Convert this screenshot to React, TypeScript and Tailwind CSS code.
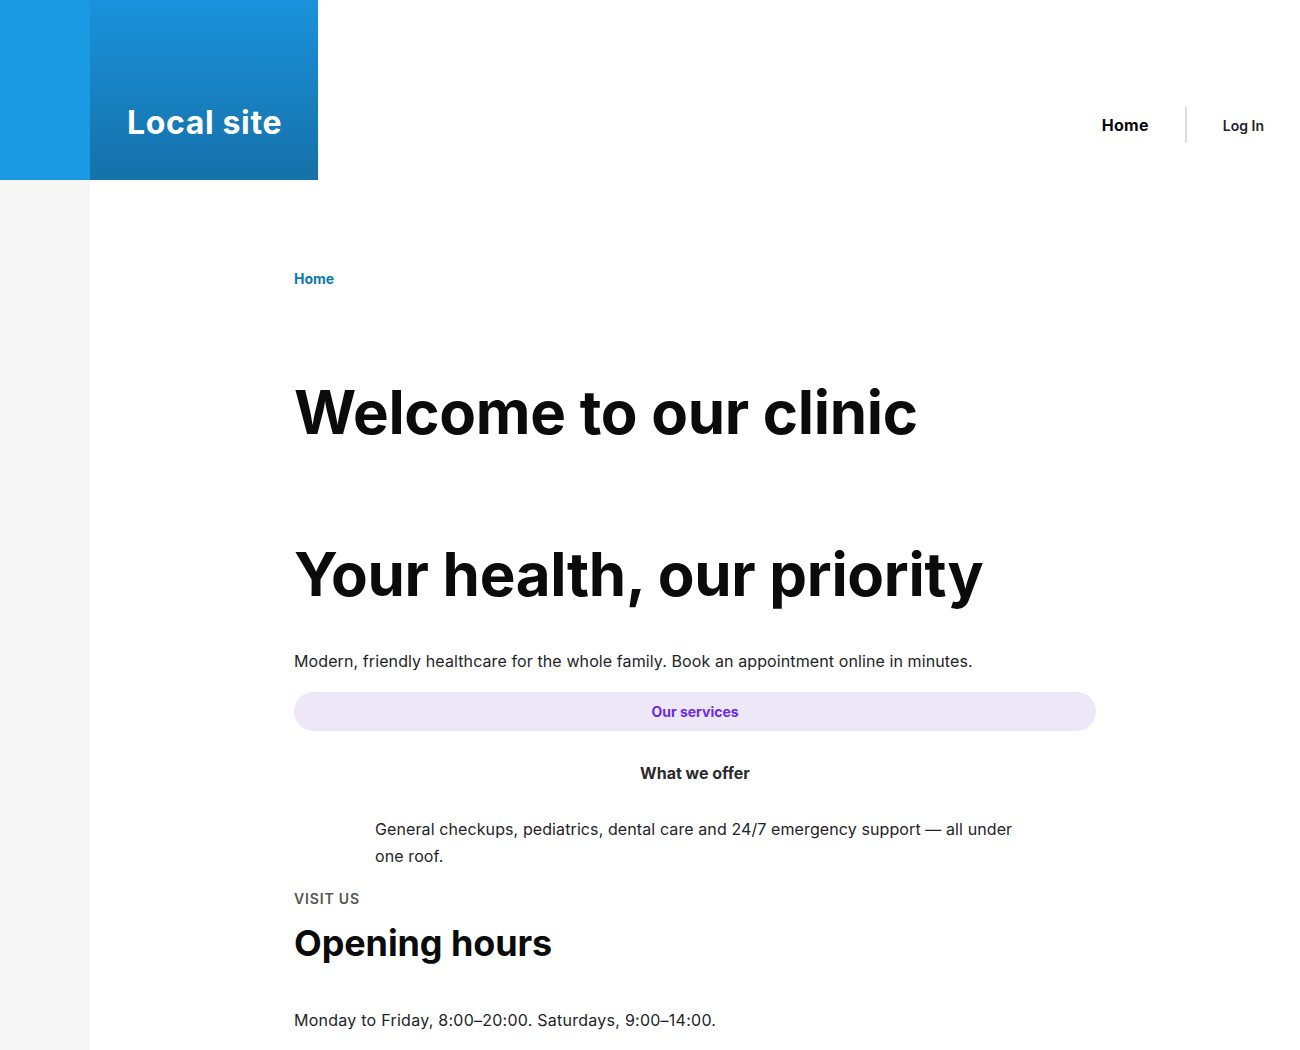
import React from "react";

const font = { fontFamily: "Inter, 'Noto Sans', sans-serif" };

export default function App() {
  return (
    <div className="min-h-[1050px] bg-white text-[#232429]" style={font}>
      {/* Header */}
      <header className="flex h-[180px]">
        <div className="w-[90px] bg-[#1b9ae4]" />
        <div className="flex w-[228px] items-end bg-gradient-to-b from-[#1a92db] to-[#1571a9] pb-[41px] pl-[37px]">
          <span className="text-[32px] font-bold leading-none tracking-[0.02em] text-white">Local site</span>
        </div>
        <nav className="flex flex-1 items-start justify-end pr-[36px] pt-[107px]" aria-label="Principal">
          <a href="#" className="flex h-[36px] items-center text-[16px] font-bold tracking-[0.02em] text-[#0b0b0b]">Home</a>
          <span className="mx-[36px] h-[36px] w-[2px] bg-[#dadde3]" />
          <a href="#" className="flex h-[36px] items-center text-[14px] font-semibold text-[#232429]">Log In</a>
        </nav>
      </header>

      <div className="flex">
        {/* Barra lateral gris */}
        <div className="min-h-[870px] w-[90px] bg-[#f5f6f5]" />

        <main className="w-[802px] pl-[204px] box-content">
          <nav className="pt-[89px] text-[14px] font-bold leading-[20px] text-[#0d77b5]">Home</nav>

          <h1 className="mt-[88px] text-[60px] font-bold leading-[70px] tracking-[-0.005em] text-[#0b0b0b]">
            Welcome to our clinic
          </h1>
          <h2 className="mt-[92px] text-[60px] font-bold leading-[70px] tracking-[-0.005em] text-[#0b0b0b]">
            Your health, our priority
          </h2>

          <p className="mt-[39px] text-[16px] leading-[27px] tracking-[0.1px]">
            Modern, friendly healthcare for the whole family. Book an appointment online in minutes.
          </p>

          <a
            href="#"
            className="mt-[17px] flex h-[39px] items-center justify-center rounded-full bg-[#ede7f8] text-[14px] font-bold text-[#6b2ce0]"
          >
            Our services
          </a>

          <h3 className="mt-[29px] text-center text-[16px] font-bold leading-[27px] text-[#2a2b2f]">What we offer</h3>

          <p className="mt-[29px] pl-[81px] pr-[80px] text-[16px] leading-[27px] tracking-[0.1px]">
            General checkups, pediatrics, dental care and 24/7 emergency support — all under one roof.
          </p>

          <div className="mt-[19px] text-[14px] font-semibold uppercase leading-[20px] tracking-[0.06em] text-[#555]">
            Visit us
          </div>
          <h2 className="mt-[12px] text-[36px] font-bold leading-[45px] tracking-[-0.1px] text-[#0b0b0b]">
            Opening hours
          </h2>
          <p className="mt-[41px] text-[16px] leading-[27px] tracking-[0.25px]">
            Monday to Friday, 8:00–20:00. Saturdays, 9:00–14:00.
          </p>
        </main>
      </div>
    </div>
  );
}
